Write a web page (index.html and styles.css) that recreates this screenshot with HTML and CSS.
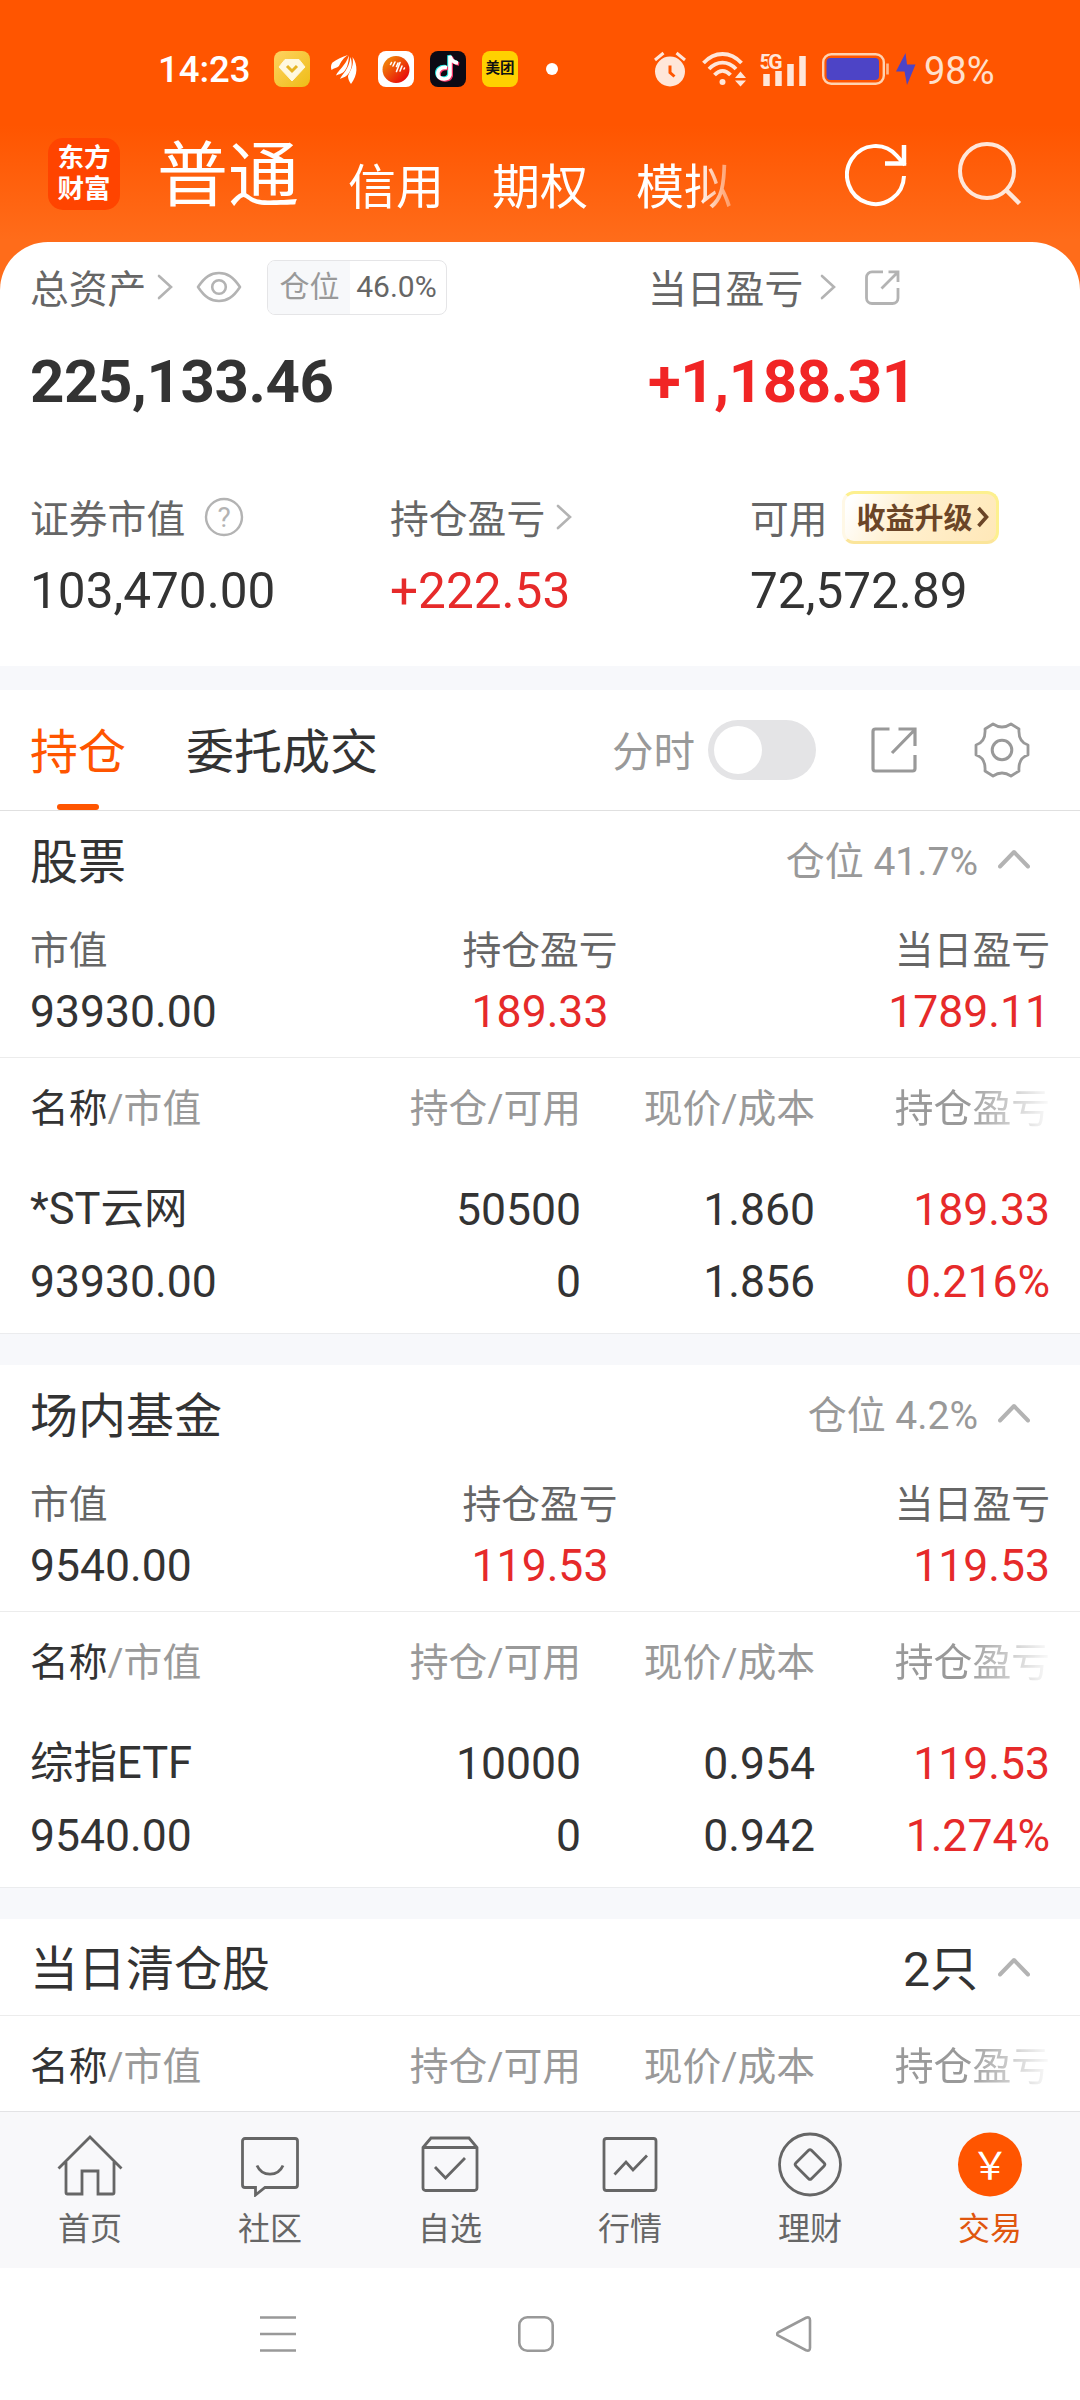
FILE: index.html
```html
<!DOCTYPE html>
<html lang="zh-CN">
  <head>
    <meta charset="utf-8" />
    <title>交易</title>
    <link rel="stylesheet" href="styles.css">
  </head>
  <body>
    <!-- shared icons -->
    <svg class="defs" width="0" height="0">
      <symbol id="right" viewBox="0 0 16 26">
        <path d="M2 2l12 11L2 24" fill="none" stroke="#b3b3b3" stroke-width="2.6" stroke-linecap="round" />
      </symbol>
      <symbol id="up" viewBox="0 0 32 20">
        <path d="M2 17.5L16 3l14 14.5" fill="none" stroke="#b3b3b3" stroke-width="4" stroke-linecap="round" stroke-linejoin="round" />
      </symbol>
    </svg>

    <div class="top">
      <div class="status">
        <span class="time">14:23</span>
        <div class="apps">
          <svg width="36" height="36" viewBox="0 0 36 36">
            <defs>
              <linearGradient id="gold" x1="0" y1="0" x2="1" y2="1">
                <stop offset="0" stop-color="#ffd261" />
                <stop offset="1" stop-color="#eebd16" />
              </linearGradient>
            </defs>
            <rect width="36" height="36" rx="8" fill="url(#gold)" />
            <path d="M11 8.500h14l6 7.500-13 14L5 16z" fill="#fff8df" stroke="#fff8df" stroke-linejoin="round" />
            <path d="M13 15l5 5 5-5" fill="none" stroke="#e6b422" stroke-width="3" />
          </svg>
          <svg width="36" height="36" viewBox="0 0 36 36">
            <g fill="#fff">
              <path d="M5.500 19c-1-3-.5-5.500 1-7.500C11 8 16 6 22 4c-5 3-7 7-9 11-2 2-5 2-7.500 4z" />
              <path d="M10 24.500c2.500-6 9-9 13-20-.5 7-1.500 12-4.500 15.500-2.500 3-5 3-8.500 4.500z" />
              <path d="M14 28c2-5 9-9 10.500-22 2 6 1.500 11-1 15-3 5-5.500 5-9.500 7z" />
              <path d="M26.500 6c5.500 8 5.500 18-1.500 27-2-3-3-5-3-8 3-7 6-10 4.500-19z" />
            </g>
          </svg>
          <svg width="36" height="36" viewBox="0 0 36 36">
            <defs>
              <linearGradient id="ball" x1="0" y1="0" x2="1" y2="1">
                <stop offset="0.2" stop-color="#f07a08" />
                <stop offset="0.85" stop-color="#e80b0b" />
              </linearGradient>
            </defs>
            <rect width="36" height="36" rx="8" fill="#fff" />
            <circle cx="18" cy="18.500" r="13.500" fill="url(#ball)" />
            <path d="M13.500 11.500l-1 2M17 11l-2 4M20 12l-1.500 3.500M22 11.500l-3.500 9M24 15l-2 5M26.500 17l-.5 1" stroke="#fff" stroke-width="1.600" stroke-linecap="round" />
          </svg>
          <svg width="36" height="36" viewBox="0 0 36 36">
            <rect width="36" height="36" rx="8" fill="#0c0a14" />
            <g fill="none" stroke-width="3.600">
              <path d="M17 16.500c-6-1-10 3-9 7.500s10 6 12 0V5c1 4 4 6.500 8 7" stroke="#25e8e2" transform="translate(-1 -.8)" />
              <path d="M17 16.500c-6-1-10 3-9 7.500s10 6 12 0V5c1 4 4 6.500 8 7" stroke="#f6376a" transform="translate(1.200 1)" />
              <path d="M17 16.500c-6-1-10 3-9 7.500s10 6 12 0V5c1 4 4 6.500 8 7" stroke="#fff" />
            </g>
          </svg>
          <span class="meituan">美团</span>
        </div>
        <span class="dot"></span>
        <div class="signals">
          <svg width="32" height="36" viewBox="0 0 32 36">
            <circle cx="16" cy="20.500" r="15" fill="#ffe6d9" />
            <path d="M1 9l8.500-7M31 9l-8.500-7" stroke="#ffe6d9" stroke-width="3" />
            <path d="M16 14.500v7l4.500 4" fill="none" stroke="#ff5500" stroke-width="3" />
          </svg>
          <svg class="wifi" width="44" height="36" viewBox="0 0 44 36">
            <g fill="none" stroke="#ffe6d9" stroke-width="3.800">
              <path d="M1.500 12c11-12 27-12 38 0" />
              <path d="M7 18c8-8.500 19-8.500 27 0" />
              <path d="M12.500 24c5-5.500 11-5.500 16 0" />
            </g>
            <circle cx="20.500" cy="31" r="3" fill="#ffe6d9" />
            <path d="M38.500 20.500l5.500 6.500H33zM38.500 35.500L44 29.500H33z" fill="#ffe6d9" />
          </svg>
          <svg class="cell" width="46" height="36" viewBox="0 0 46 36">
            <path d="M6.500 23v12M18.500 20v15M30.500 13v22M42.500 5v30" stroke="#ffe6d9" stroke-width="6.500" />
            <text x="-.5" y="18" class="fiveg" textLength="23">5G</text>
          </svg>
          <svg class="battery" width="67" height="32" viewBox="0 0 67 32">
            <rect x="1.200" y="1.200" width="60.600" height="29.600" rx="8" fill="none" stroke="#ffd2b0" stroke-width="2.400" />
            <rect x="4.500" y="5" width="52.500" height="22" rx="4" fill="#4d44c6" />
            <path d="M65.500 10.500v11" stroke="#ffb98e" stroke-width="2.600" />
          </svg>
          <svg class="bolt" width="20" height="32" viewBox="0 0 20 32">
            <path d="M9.500 0L0 18.500h8.500L11 32l8.500-20.500H11z" fill="#4d44c6" />
          </svg>
          <span class="percent">98%</span>
        </div>
      </div>

      <div class="header">
        <div class="logo">东方<br />财富</div>
        <div class="accounts">
          <span class="current">普通</span>
          <span>信用</span>
          <span>期权</span>
          <span>模拟</span>
        </div>
        <svg class="refresh" width="62" height="64" viewBox="0 0 62 64">
          <path d="M59 33a28.500 29 0 1 1-7-20l8 9" fill="none" stroke="#fff" stroke-width="4" />
          <path d="M59 2v18.500H40" fill="none" stroke="#fff" stroke-width="4.500" />
        </svg>
        <svg class="search" width="64" height="64" viewBox="0 0 64 64">
          <circle cx="29" cy="30" r="27" fill="none" stroke="#ffe6d9" stroke-width="4" />
          <path d="M48 49l13.500 13.500" stroke="#ffe6d9" stroke-width="4.500" />
        </svg>
      </div>
    </div>

    <div class="assets">
      <div class="total">
        <div class="total-cell">
          <div class="label">
            <span>总资产</span><svg class="arrow" width="16" height="26"><use href="#right" /></svg>
            <svg class="eye" width="46" height="32" viewBox="0 0 46 32">
              <path d="M2 16C9 5.500 15 2 23 2s14 3.500 21 14c-7 10.500-13 14-21 14S9 26.500 2 16z" fill="none" stroke="#b3b3b3" stroke-width="2.600" stroke-linejoin="round" />
              <circle cx="23" cy="16" r="6.800" fill="none" stroke="#b3b3b3" stroke-width="2.600" />
            </svg>
            <div class="ratio"><span class="ratio-name">仓位</span><span class="ratio-value">46.0%</span></div>
          </div>
          <div class="big">225,133.46</div>
        </div>
        <div class="total-cell">
          <div class="label">
            <span>当日盈亏</span><svg class="arrow wide" width="16" height="26"><use href="#right" /></svg>
            <svg class="share" width="35" height="35" viewBox="0 0 35 35">
              <path d="M18 1.800H7a5.500 5.500 0 0 0-5.500 5.500V28A5.500 5.500 0 0 0 7 33.500h20.500A5.500 5.500 0 0 0 33 28V18M16.500 18.500L32 3M23.500 1.800H33V12" fill="none" stroke="#b3b3b3" stroke-width="2.800" />
            </svg>
          </div>
          <div class="big red">+1,188.31</div>
        </div>
      </div>
      <div class="details">
        <div class="detail">
          <div class="label">
            <span>证券市值</span>
            <svg class="help" width="40" height="40" viewBox="0 0 40 40">
              <circle cx="20" cy="20" r="18" fill="none" stroke="#b3b3b3" stroke-width="2.400" />
              <text x="20" y="29.500" text-anchor="middle" class="mark">?</text>
            </svg>
          </div>
          <div class="value">103,470.00</div>
        </div>
        <div class="detail">
          <div class="label"><span>持仓盈亏</span><svg class="arrow" width="16" height="26"><use href="#right" /></svg></div>
          <div class="value red">+222.53</div>
        </div>
        <div class="detail">
          <div class="label">
            <span>可用</span>
            <div class="upgrade"><span>收益升级</span><svg width="12" height="22" viewBox="0 0 12 22"><path d="M1.500 2l8 9-8 9" fill="none" stroke="#6b4527" stroke-width="3.600" /></svg></div>
          </div>
          <div class="value">72,572.89</div>
        </div>
      </div>
    </div>

    <div class="tabs">
      <span class="tab selected">持仓</span>
      <span class="tab">委托成交</span>
      <span class="minute">分时</span>
      <span class="toggle"></span>
      <svg class="export" width="46" height="46" viewBox="0 0 46 46">
        <path d="M18.500 2H4.500A2.500 2.500 0 0 0 2 4.500v37A2.500 2.500 0 0 0 4.500 44h37a2.500 2.500 0 0 0 2.500-2.500V28M21 26L43 3.500M27.500 2H44v17" fill="none" stroke="#999" stroke-width="3.200" />
      </svg>
      <svg class="gear" width="56" height="56" viewBox="0 0 56 56">
        <path d="M19 2q9 6 18 0l8 5q-1 13 9 16v10q-10 3-9 16l-8 5q-9-6-18 0l-8-5q1-13-9-16V23q10-3 9-16z" fill="none" stroke="#999" stroke-width="2.800" stroke-linejoin="round" />
        <circle cx="28" cy="28" r="9.800" fill="none" stroke="#999" stroke-width="3" />
      </svg>
    </div>

    <div class="list">
      <div class="section">
        <div class="title">
          <span>股票</span>
          <span class="weight">仓位 41.7%</span>
          <svg width="32" height="20"><use href="#up" /></svg>
        </div>
        <div class="summary">
          <div><p>市值</p><b>93930.00</b></div>
          <div><p>持仓盈亏</p><b class="red">189.33</b></div>
          <div><p>当日盈亏</p><b class="red">1789.11</b></div>
        </div>
        <div class="row head">
          <span><em>名称</em>/市值</span><span>持仓/可用</span><span>现价/成本</span><span class="fade">持仓盈亏</span>
        </div>
        <div class="rows">
          <div class="row"><span class="name">*ST云网</span><span>50500</span><span>1.860</span><span class="red">189.33</span></div>
          <div class="row"><span>93930.00</span><span>0</span><span>1.856</span><span class="red">0.216%</span></div>
        </div>
      </div>

      <div class="section">
        <div class="title">
          <span>场内基金</span>
          <span class="weight">仓位 4.2%</span>
          <svg width="32" height="20"><use href="#up" /></svg>
        </div>
        <div class="summary">
          <div><p>市值</p><b>9540.00</b></div>
          <div><p>持仓盈亏</p><b class="red">119.53</b></div>
          <div><p>当日盈亏</p><b class="red">119.53</b></div>
        </div>
        <div class="row head">
          <span><em>名称</em>/市值</span><span>持仓/可用</span><span>现价/成本</span><span class="fade">持仓盈亏</span>
        </div>
        <div class="rows">
          <div class="row"><span class="name">综指ETF</span><span>10000</span><span>0.954</span><span class="red">119.53</span></div>
          <div class="row"><span>9540.00</span><span>0</span><span>0.942</span><span class="red">1.274%</span></div>
        </div>
      </div>

      <div class="section">
        <div class="title short">
          <span>当日清仓股</span>
          <span class="weight count">2只</span>
          <svg width="32" height="20"><use href="#up" /></svg>
        </div>
        <div class="row head">
          <span><em>名称</em>/市值</span><span>持仓/可用</span><span>现价/成本</span><span class="fade">持仓盈亏</span>
        </div>
      </div>
    </div>

    <div class="nav">
      <div class="item">
        <svg width="66" height="66" viewBox="0 0 66 66">
          <path d="M1.500 37.500L33 6l31.500 31.500M9 31v30.500a1.500 1.500 0 0 0 1.500 1.500H25V40h16v23h14.500a1.500 1.500 0 0 0 1.500-1.500V31" />
        </svg>
        首页
      </div>
      <div class="item">
        <svg width="66" height="66" viewBox="0 0 66 66">
          <path d="M8 7.500h50a2.500 2.500 0 0 1 2.500 2.500v44a2.500 2.500 0 0 1-2.500 2.500H28L18.500 64v-7.500H8A2.500 2.500 0 0 1 5.500 54V10A2.500 2.500 0 0 1 8 7.500zM20 34.500c5 11.500 21 11.500 26 0" />
        </svg>
        社区
      </div>
      <div class="item">
        <svg width="66" height="66" viewBox="0 0 66 66">
          <path d="M6 16.500l8-9.500h38l8 9.500V57a2.500 2.500 0 0 1-2.500 2.500h-49A2.500 2.500 0 0 1 6 57zM6 16.500h54M18 36l10.500 11L48 27" />
        </svg>
        自选
      </div>
      <div class="item">
        <svg width="66" height="66" viewBox="0 0 66 66">
          <rect x="7" y="7.500" width="52" height="52" rx="2.500" />
          <path d="M17.500 43.500L29 31l7 8 14-14.500" />
        </svg>
        行情
      </div>
      <div class="item">
        <svg width="66" height="66" viewBox="0 0 66 66">
          <circle cx="33" cy="33.500" r="30.500" />
          <rect x="22" y="22.500" width="22" height="22" rx="2" transform="rotate(45 33 33.500)" />
        </svg>
        理财
      </div>
      <div class="item active">
        <svg width="66" height="66" viewBox="0 0 66 66">
          <circle class="coin" cx="33" cy="33.500" r="32" />
          <text class="yen" x="33" y="47.500" text-anchor="middle">￥</text>
        </svg>
        交易
      </div>
    </div>

    <div class="system">
      <svg width="36" height="36" viewBox="0 0 36 36"><path d="M0 1.500h36M0 18h36M0 34.500h36" /></svg>
      <svg width="36" height="36" viewBox="0 0 36 36"><rect x="1.300" y="1.300" width="33.400" height="33.400" rx="8" /></svg>
      <svg width="36" height="36" viewBox="0 0 36 36"><path d="M2 16.500L30 1.800q4-1.500 4 2.500v27.400q0 4-4 2.500L2 19.500q-2-1.500 0-3z" /></svg>
    </div>
  </body>
</html>
```

FILE: styles.css
```css
* {
  box-sizing: border-box;
}

body {
  margin: 0;
  width: 1080px;
  height: 2400px;
  overflow: hidden;
  background: #fff;
  color: #333;
  font-family: Roboto, "Noto Sans CJK SC", sans-serif;
}

svg {
  display: block;
  flex-shrink: 0;
}

.defs {
  position: absolute;
}

.red {
  color: #e62a2a;
}

/* status bar + header */
.top {
  height: 290px;
  background: linear-gradient(#ff5500 125px, #ff6c1a 240px);
}

.status {
  display: flex;
  align-items: center;
  height: 138px;
  padding-left: 158px;
  color: #fff;
}

.time {
  width: 116px;
  font-size: 36.5px;
  font-weight: 500;
}

.apps {
  display: flex;
  gap: 16px;
}

.meituan {
  width: 36px;
  height: 36px;
  border-radius: 8px;
  background: #ffd100;
  color: #111;
  font-size: 14.5px;
  font-weight: 700;
  line-height: 36px;
  text-align: center;
}

.dot {
  width: 12px;
  height: 12px;
  margin-left: 28px;
  border-radius: 50%;
  background: #fff;
}

.signals {
  display: flex;
  align-items: center;
  margin-left: 96px;
  color: #ffe0cc;
}

.wifi {
  margin-left: 16px;
}

.cell {
  margin-left: 14px;
}

.fiveg {
  fill: #ffe6d9;
  stroke: #ff5500;
  stroke-width: 3px;
  paint-order: stroke;
  font-size: 21px;
  font-weight: 700;
}

.battery {
  margin-left: 16px;
}

.bolt {
  margin-left: 7px;
}

.percent {
  margin-left: 8px;
  padding-top: 3px;
  font-size: 38px;
}

.header {
  display: flex;
  height: 104px;
  padding-left: 48px;
  color: #fff;
}

.logo {
  width: 72px;
  height: 72px;
  border-radius: 15px;
  background: #ff4400;
  padding-top: 4px;
  font-size: 26.5px;
  font-weight: 700;
  line-height: 31px;
  text-align: center;
}

.accounts {
  display: flex;
  gap: 48px;
  width: 574px;
  margin-left: 37px;
  font-size: 48px;
  line-height: 99px;
  white-space: nowrap;
  -webkit-mask-image: linear-gradient(90deg, #000 540px, transparent 592px);
  mask-image: linear-gradient(90deg, #000 540px, transparent 592px);
}

.accounts .current {
  margin-right: 1px;
  font-size: 71px;
  line-height: 76px;
}

.refresh {
  margin: 5px 0 0 114px;
}

.search {
  margin: 3px 0 0 51px;
}

/* assets */
.assets {
  height: 424px;
  margin-top: -48px;
  padding: 18px 30px 0;
  border-radius: 48px 48px 0 0;
  background: #fff;
}

.total {
  display: grid;
  grid-template-columns: 618px 1fr;
}

.label {
  display: flex;
  align-items: center;
  height: 54px;
  color: #666;
  font-size: 38.8px;
  white-space: nowrap;
}

.label > span {
  padding-bottom: 2px;
}

.arrow {
  margin-left: 11px;
}

.arrow.wide {
  margin-left: 17px;
}

.eye {
  margin-left: 23px;
}

.share {
  margin-left: 29px;
}

.ratio {
  display: flex;
  width: 180px;
  height: 55px;
  margin-left: 25px;
  border: 1px solid #e5e5e7;
  border-radius: 8px;
  overflow: hidden;
  font-size: 30px;
  line-height: 52px;
}

.ratio-name {
  width: 82px;
  background: #f7f8fa;
  color: #999;
  text-align: center;
}

.ratio-value {
  width: 92px;
  text-align: center;
}

.big {
  margin-top: 31px;
  font-size: 60px;
  font-weight: 700;
  letter-spacing: -0.4px;
  line-height: 74px;
}

.big.red {
  color: #f12525;
}

.details {
  display: grid;
  grid-template-columns: 360px 360px 1fr;
  margin-top: 71px;
}

.help {
  margin-left: 19px;
}

.mark {
  fill: #b3b3b3;
  font-size: 28px;
}

.value {
  margin-top: 17px;
  font-size: 49.5px;
  line-height: 60px;
}

.upgrade {
  display: flex;
  align-items: center;
  gap: 4px;
  width: 157px;
  height: 53px;
  margin-left: 14px;
  padding-left: 12px;
  border: 3px solid #fdf08f;
  border-left-color: #fff8e6;
  border-bottom-color: #fbe59a;
  border-radius: 12px;
  background: linear-gradient(120deg, #fff 5%, #fff0cf 40%, #ffe8b8);
  color: #6b4527;
  font-size: 29px;
  font-weight: 700;
}

.upgrade span {
  padding-bottom: 3px;
}

/* tabs */
.tabs {
  display: flex;
  align-items: center;
  height: 145px;
  padding-left: 30px;
  border-top: 24px solid #f7f8fb;
  border-bottom: 1px solid #e0e0e0;
}

.tab {
  position: relative;
  height: 120px;
  margin-right: 60px;
  font-size: 48px;
  line-height: 125px;
}

.tab.selected {
  color: #ff5500;
}

.tab.selected::after {
  content: "";
  position: absolute;
  left: 27px;
  bottom: 0;
  width: 42px;
  height: 6px;
  border-radius: 3px;
  background: #ff5500;
}

.minute {
  margin-left: 174px;
  padding-bottom: 3px;
  color: #999;
  font-size: 41.5px;
}

.toggle {
  width: 108px;
  height: 60px;
  margin-left: 13px;
  padding: 6px;
  border-radius: 30px;
  background: #e4e4e6;
}

.toggle::before {
  content: "";
  display: block;
  width: 48px;
  height: 48px;
  border-radius: 50%;
  background: #fff;
}

.export {
  margin-left: 55px;
}

.gear {
  margin-left: 57px;
}

/* holdings */
.list {
  height: 1300px;
  overflow: hidden;
}

.section {
  border-bottom: 31px solid #f7f8fb;
}

.title {
  display: flex;
  align-items: center;
  height: 100px;
  padding: 0 50px 4px 30px;
  font-size: 48px;
}

.title span {
  padding-bottom: 3px;
}

.title.short {
  height: 96px;
  padding-bottom: 1px;
}

.weight {
  margin-left: auto;
  margin-right: 20px;
  color: #999;
  font-size: 39px;
}

.count {
  color: #333;
  font-size: 48px;
}

.summary {
  display: flex;
  justify-content: space-between;
  height: 146px;
  padding: 12px 30px 0;
}

.summary div {
  width: 240px;
  text-align: center;
}

.summary div:first-child {
  text-align: left;
}

.summary div:last-child {
  text-align: right;
}

.summary p {
  margin: 0;
  color: #666;
  font-size: 38.8px;
  line-height: 56px;
}

.summary b {
  display: block;
  font-size: 44.5px;
  font-weight: 400;
  line-height: 67px;
}

.row {
  display: grid;
  grid-template-columns: 315px 236px 234px 235px;
  padding: 0 30px;
  font-size: 44.5px;
  line-height: 72px;
  text-align: right;
}

.row span:first-child {
  text-align: left;
}

.row .name {
  font-size: 43.5px;
}

.rows {
  height: 178px;
  padding-top: 18px;
  border-bottom: 1px solid #ebecee;
}

.head {
  height: 99px;
  border-top: 1px solid #ececec;
  color: #999;
  font-size: 38.8px;
  line-height: 101px;
}

.head em {
  color: #333;
  font-style: normal;
}

.fade {
  -webkit-mask-image: linear-gradient(90deg, #000 150px, transparent 238px);
  mask-image: linear-gradient(90deg, #000 150px, transparent 238px);
}

/* bottom navigation */
.nav {
  display: flex;
  height: 157px;
  border-top: 1px solid #e3e3e5;
  background: #f8f8fa;
}

.item {
  display: flex;
  flex-direction: column;
  align-items: center;
  width: 180px;
  padding-top: 19px;
  color: #666;
  font-size: 32px;
  line-height: 64px;
}

.item svg {
  fill: none;
  stroke: #666;
  stroke-width: 2.8px;
}

.active {
  color: #e0560e;
}

.item .coin {
  fill: #ff5500;
  stroke: none;
}

.item .yen {
  fill: #fff;
  stroke: none;
  font-family: "Noto Sans CJK SC", sans-serif;
  font-size: 38px;
}

.system {
  display: flex;
  gap: 222px;
  height: 132px;
  padding: 48px 0 0 260px;
}

.system svg {
  fill: none;
  stroke: #999;
  stroke-width: 2.6px;
}
```
